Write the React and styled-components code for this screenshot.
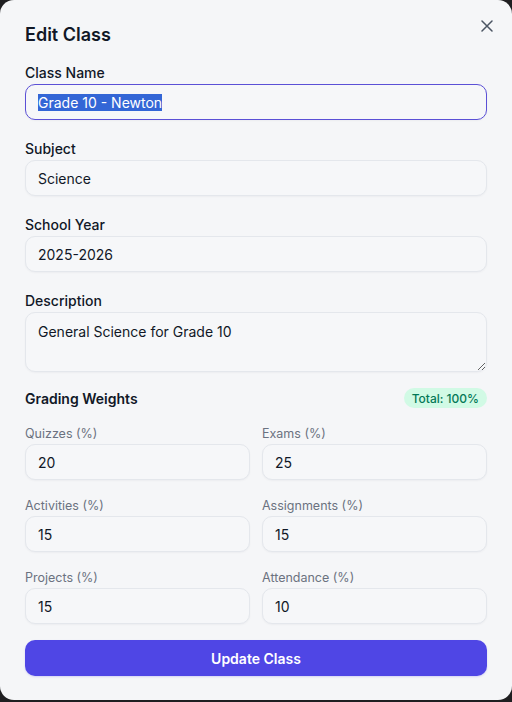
import React, { useEffect, useRef } from 'react';
import styled, { createGlobalStyle } from 'styled-components';

const GlobalStyle = createGlobalStyle`
  html, body {
    margin: 0;
    padding: 0;
    background: #1f1f21;
  }
  * {
    box-sizing: border-box;
  }
`;

const Modal = styled.div`
  position: relative;
  width: 512px;
  height: 700px;
  background: #f5f6f8;
  border-radius: 14px;
  padding: 21px 25px 24px;
  font-family: Inter, "Noto Sans", sans-serif;
  color: #111827;
  display: flex;
  flex-direction: column;
`;

const Title = styled.h2`
  margin: 0 0 13px;
  font-size: 18px;
  line-height: 28px;
  font-weight: 600;
  color: #111827;
`;

const CloseButton = styled.button`
  position: absolute;
  top: 18px;
  right: 17px;
  width: 16px;
  height: 16px;
  padding: 0;
  border: none;
  background: transparent;
  color: #4b5563;
  display: flex;
  align-items: center;
  justify-content: center;
  cursor: pointer;
`;

const Field = styled.div`
  display: flex;
  flex-direction: column;
  margin-bottom: 18px;
`;

const Label = styled.label`
  font-size: 14px;
  line-height: 22px;
  font-weight: 500;
  color: #111827;
`;

const Input = styled.input`
  height: 36px;
  width: 100%;
  padding: 0 12px;
  font-family: inherit;
  font-size: 14px;
  color: #111827;
  background: #f6f7f9;
  border: 1px solid #e4e7ec;
  border-radius: 10px;
  box-shadow: 0 1px 2px rgba(16, 24, 40, 0.04);
  outline: none;

  &:focus {
    border-color: #5b50d6;
  }

  &::selection {
    background: #3366d6;
    color: #ffffff;
  }
`;

const TextArea = styled.textarea`
  height: 60px;
  width: 100%;
  padding: 9px 12px;
  font-family: inherit;
  font-size: 14px;
  line-height: 20px;
  color: #111827;
  background: #f6f7f9;
  border: 1px solid #e4e7ec;
  border-radius: 10px;
  box-shadow: 0 1px 2px rgba(16, 24, 40, 0.04);
  outline: none;
  resize: vertical;
`;

const SectionHeader = styled.div`
  display: flex;
  align-items: center;
  justify-content: space-between;
  height: 24px;
  margin: -4px 0 14px;
`;

const SectionTitle = styled.h3`
  margin: 0;
  font-size: 14px;
  font-weight: 600;
  color: #111827;
`;

const Badge = styled.span`
  display: inline-flex;
  align-items: center;
  height: 20px;
  padding: 0 8px;
  border-radius: 10px;
  background: #d1fae5;
  color: #047857;
  font-size: 12px;
  font-weight: 500;
`;

const WeightGrid = styled.div`
  display: grid;
  grid-template-columns: 1fr 1fr;
  column-gap: 12px;
  row-gap: 16px;
  margin-bottom: 16px;
`;

const WeightField = styled.div`
  display: flex;
  flex-direction: column;
`;

const SmallLabel = styled.label`
  font-size: 12.5px;
  line-height: 20px;
  color: #6b7280;
`;

const SubmitButton = styled.button`
  height: 36px;
  width: 100%;
  border: none;
  border-radius: 10px;
  background: #4f46e5;
  color: #ffffff;
  font-family: inherit;
  font-size: 14px;
  font-weight: 600;
  box-shadow: 0 1px 2px rgba(79, 70, 229, 0.2);
  cursor: pointer;
`;

const weights = [
  { label: 'Quizzes (%)', value: '20' },
  { label: 'Exams (%)', value: '25' },
  { label: 'Activities (%)', value: '15' },
  { label: 'Assignments (%)', value: '15' },
  { label: 'Projects (%)', value: '15' },
  { label: 'Attendance (%)', value: '10' },
];

const App = () => {
  const nameRef = useRef(null);

  useEffect(() => {
    if (nameRef.current) {
      nameRef.current.focus();
      nameRef.current.select();
    }
  }, []);

  return (
    <>
      <GlobalStyle />
      <Modal>
        <CloseButton aria-label="Close">
          <svg width="12" height="12" viewBox="0 0 12 12" fill="none" stroke="currentColor" strokeWidth="1.5" strokeLinecap="round">
            <path d="M1 1l10 10M11 1L1 11" />
          </svg>
        </CloseButton>
        <Title>Edit Class</Title>

        <Field>
          <Label>Class Name</Label>
          <Input ref={nameRef} defaultValue="Grade 10 - Newton" />
        </Field>

        <Field>
          <Label>Subject</Label>
          <Input defaultValue="Science" />
        </Field>

        <Field>
          <Label>School Year</Label>
          <Input defaultValue="2025-2026" />
        </Field>

        <Field>
          <Label>Description</Label>
          <TextArea defaultValue="General Science for Grade 10" />
        </Field>

        <SectionHeader>
          <SectionTitle>Grading Weights</SectionTitle>
          <Badge>Total: 100%</Badge>
        </SectionHeader>

        <WeightGrid>
          {weights.map((w) => (
            <WeightField key={w.label}>
              <SmallLabel>{w.label}</SmallLabel>
              <Input type="number" defaultValue={w.value} />
            </WeightField>
          ))}
        </WeightGrid>

        <SubmitButton>Update Class</SubmitButton>
      </Modal>
    </>
  );
};

export default App;
